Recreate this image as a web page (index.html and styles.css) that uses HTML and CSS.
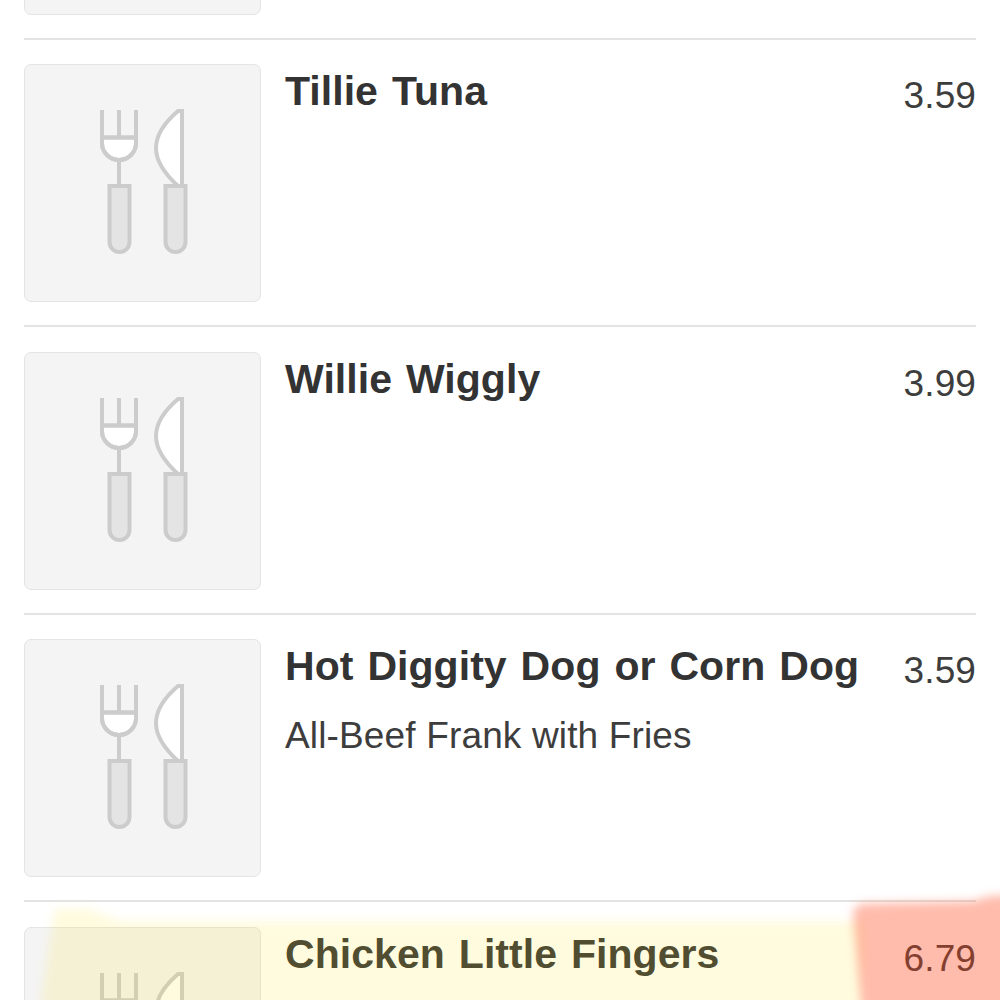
FILE: index.html
```html
<!DOCTYPE html>
<html lang="en">
<head>
<meta charset="UTF-8">
<title>Menu</title>
<link rel="stylesheet" href="styles.css">
</head>
<body>
    <svg class="icon-defs" width="0" height="0">
        <symbol id="cutlery" viewBox="0 0 90 150">
            <path class="part-white" d="M3 29.5H37V35a17 17 0 0 1-34 0Z"/>
            <path d="M3 2V35a17 17 0 0 0 34 0V2M20 2V29.5M3 29.5H37M20 52V78"/>
            <path class="part-handle" d="M10.5 78H30.5V134a10 10 0 0 1-20 0Z"/>
            <path class="part-white" d="M83 3H79C65 15 57 28 57 40C57 55 68 68 79 78H83Z"/>
            <path class="part-handle" d="M66.5 78H86.5V134a10 10 0 0 1-20 0Z"/>
        </symbol>
    </svg>

    <div class="menu-list">
        <div class="menu-item">
            <div class="thumb"><svg class="cutlery"><use href="#cutlery"/></svg></div>
        </div>
        <div class="menu-item">
            <div class="thumb"><svg class="cutlery"><use href="#cutlery"/></svg></div>
            <div class="info"><h3>Tillie Tuna</h3></div>
            <div class="price">3.59</div>
        </div>
        <div class="menu-item">
            <div class="thumb"><svg class="cutlery"><use href="#cutlery"/></svg></div>
            <div class="info"><h3>Willie Wiggly</h3></div>
            <div class="price">3.99</div>
        </div>
        <div class="menu-item">
            <div class="thumb"><svg class="cutlery"><use href="#cutlery"/></svg></div>
            <div class="info">
                <h3>Hot Diggity Dog or Corn Dog</h3>
                <p>All-Beef Frank with Fries</p>
            </div>
            <div class="price">3.59</div>
        </div>
        <div class="menu-item">
            <div class="thumb"><svg class="cutlery"><use href="#cutlery"/></svg></div>
            <div class="info"><h3>Chicken Little Fingers</h3></div>
            <div class="price">6.79</div>
        </div>
    </div>

    <div class="marker marker-yellow"></div>
    <div class="marker marker-red"></div>
</body>
</html>
```

FILE: styles.css
```css
html, body {
    margin: 0;
    height: 100%;
    overflow: hidden;
    background: #ffffff;
}

body {
    position: relative;
    font-family: "Liberation Sans", Arial, sans-serif;
    color: #333333;
}

.icon-defs {
    position: absolute;
}

.menu-list {
    margin: -250px 24px 0;
}

.menu-item {
    display: grid;
    grid-template-columns: 237px 1fr auto;
    column-gap: 24px;
    padding: 24.5px 0 23px;
    border-top: 2px solid #e3e3e3;
}

.thumb {
    box-sizing: border-box;
    width: 237px;
    height: 238px;
    display: flex;
    align-items: center;
    justify-content: center;
    background: #f4f4f4;
    border: 1.5px solid #e4e4e4;
    border-radius: 7px;
}

.cutlery {
    width: 90px;
    height: 150px;
    margin: 0 0 0 2px;
    fill: none;
    stroke: #cccccc;
    stroke-width: 4;
    filter: blur(0.7px);
}

.part-white {
    fill: #ffffff;
}

.part-handle {
    fill: #e4e4e4;
}

.info h3 {
    margin: 3px 0 0;
    font-size: 41px;
    line-height: 48px;
    font-weight: bold;
    letter-spacing: 0.05px;
    word-spacing: 2.5px;
    white-space: nowrap;
}

.info p {
    margin: 22px 0 0;
    font-size: 37px;
    line-height: 48px;
    letter-spacing: 0.15px;
    color: #3d3d3d;
}

.price {
    margin-top: 8px;
    font-size: 37px;
    line-height: 48px;
    letter-spacing: 0.1px;
    color: #3d3d3d;
}

/* highlighter strokes over the last row */
.marker {
    position: absolute;
    filter: blur(5px);
}

.marker::before {
    content: "";
    display: block;
    height: 100%;
}

.marker-yellow {
    left: 38px;
    top: 905px;
    width: 825px;
    height: 115px;
}

.marker-yellow::before {
    background: rgba(255, 228, 40, 0.15);
    clip-path: polygon(2% 3%, 6% 3%, 10% 14%, 100% 14%, 100% 100%, 0 100%);
}

.marker-red {
    left: 853px;
    top: 895px;
    width: 160px;
    height: 125px;
}

.marker-red::before {
    background: rgba(255, 70, 25, 0.36);
    clip-path: polygon(0 12%, 5% 7%, 75% 5%, 85% 1%, 100% 0, 100% 100%, 6% 100%);
}
```
